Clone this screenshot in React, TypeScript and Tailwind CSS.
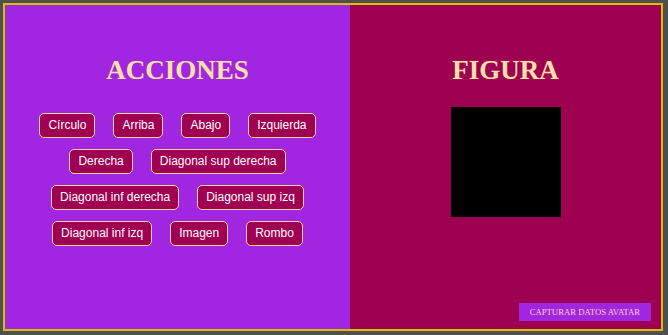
const acciones = [
  "Círculo",
  "Arriba",
  "Abajo",
  "Izquierda",
  "Derecha",
  "Diagonal sup derecha",
  "Diagonal inf derecha",
  "Diagonal sup izq",
  "Diagonal inf izq",
  "Imagen",
  "Rombo",
];

function App() {
  return (
    <div className="h-screen w-full bg-[#4f4f4f] pt-[3px] pl-[3px] pr-[5px] pb-[4px]">
      <div className="flex h-full border-2 border-[#d6c000]">
        {/* Panel de acciones */}
        <div className="flex w-[345px] flex-col items-center bg-[#a126e1] pt-[49px]">
          <h1 className="font-['Liberation_Serif',serif] text-[27px] font-bold leading-[32px] text-[#ffe0a8]">
            ACCIONES
          </h1>
          <div className="mt-[27px] flex w-[320px] flex-wrap justify-center gap-x-[18px] gap-y-[11px]">
            {acciones.map((a) => (
              <button
                key={a}
                className="rounded-[5px] border border-[#ffcf9f] bg-[#a00052] px-2 py-[4px] font-['Liberation_Sans',Arial,sans-serif] text-[12px] leading-[15px] text-white"
              >
                {a}
              </button>
            ))}
          </div>
        </div>

        {/* Panel de figura */}
        <div className="flex flex-1 flex-col items-center bg-[#9e0052] pt-[49px]">
          <h1 className="font-['Liberation_Serif',serif] text-[27px] font-bold leading-[32px] text-[#ffe0a8]">
            FIGURA
          </h1>
          <div className="mt-[21px] h-[110px] w-[110px] bg-black" />
          <button className="mt-auto mb-[8px] mr-[10px] self-end bg-[#a126e1] px-[11px] py-[4px] font-['Liberation_Serif',serif] text-[8.7px] leading-[10px] text-[#ffd2b0]">
            CAPTURAR DATOS AVATAR
          </button>
        </div>
      </div>
    </div>
  );
}

export default App;
